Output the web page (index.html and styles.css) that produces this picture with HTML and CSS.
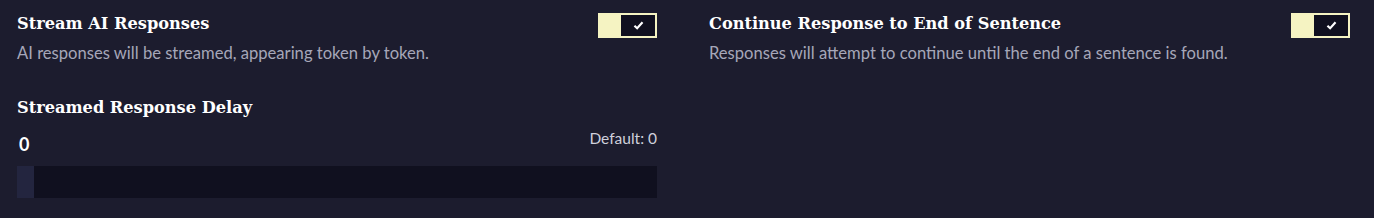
FILE: index.html
```html
<!DOCTYPE html>
<html lang="en">
<head>
  <meta charset="UTF-8">
  <title>Settings</title>
  <link rel="stylesheet" href="styles.css">
</head>
<body>
  <div class="settings">
    <div class="column">
      <div class="setting">
        <div class="setting-head">
          <h3>Stream AI Responses</h3>
          <label class="toggle">
            <span class="toggle-on"></span>
            <span class="toggle-knob">
              <svg viewBox="0 0 12 10"><path d="M1.5 5.2l3 2.8 6-6.5" fill="none" stroke="#fff" stroke-width="2.4"/></svg>
            </span>
          </label>
        </div>
        <p class="desc">AI responses will be streamed, appearing token by token.</p>
      </div>

      <div class="setting slider-setting">
        <h3>Streamed Response Delay</h3>
        <div class="slider-info">
          <span class="value">0</span>
          <span class="default">Default: 0</span>
        </div>
        <div class="track">
          <div class="thumb"></div>
        </div>
      </div>
    </div>

    <div class="column">
      <div class="setting">
        <div class="setting-head">
          <h3>Continue Response to End of Sentence</h3>
          <label class="toggle">
            <span class="toggle-on"></span>
            <span class="toggle-knob">
              <svg viewBox="0 0 12 10"><path d="M1.5 5.2l3 2.8 6-6.5" fill="none" stroke="#fff" stroke-width="2.4"/></svg>
            </span>
          </label>
        </div>
        <p class="desc">Responses will attempt to continue until the end of a sentence is found.</p>
      </div>
    </div>
  </div>
</body>
</html>
```

FILE: styles.css
```css
:root {
  --bg: #1c1c2e;
  --dark: #10101f;
  --accent: #f5f3c2;
  --text: #ffffff;
  --muted: #a6a7b9;
}
body {
  margin: 0;
  background: var(--bg);
  color: var(--text);
  font-family: 'Source Sans Pro', Lato, 'Noto Sans', sans-serif;
}
.settings {
  display: grid;
  grid-template-columns: 640px 641px;
  column-gap: 52px;
  padding: 13px 17px 0;
}
.column {
  display: flex;
  flex-direction: column;
  gap: 34px;
}
h3 {
  margin: 0;
  font-family: 'DejaVu Serif', serif;
  font-size: 16.2px;
  font-weight: 700;
  line-height: 22px;
}
.setting-head {
  display: flex;
  justify-content: space-between;
  align-items: flex-start;
}
.desc {
  margin: 5px 0 0;
  font-size: 16.6px;
  line-height: 20px;
  color: var(--muted);
}
.toggle {
  display: flex;
  width: 55px;
  height: 21px;
  border: 2px solid var(--accent);
  background: var(--accent);
}
.toggle-on {
  flex: 1;
}
.toggle-knob {
  width: 34px;
  background: var(--dark);
  display: flex;
  align-items: center;
  justify-content: center;
}
.toggle-knob svg {
  width: 11px;
  height: 9px;
}
.slider-info {
  display: flex;
  justify-content: space-between;
  align-items: flex-end;
  margin-top: 10px;
}
.value {
  font-size: 18px;
  font-weight: 700;
  padding-left: 2px;
}
.default {
  font-size: 15.5px;
  color: #cfd0dc;
  margin-bottom: 8px;
}
.track {
  margin-top: 11px;
  height: 32px;
  background: var(--dark);
}
.thumb {
  width: 17px;
  height: 100%;
  background: #23253f;
}
```
